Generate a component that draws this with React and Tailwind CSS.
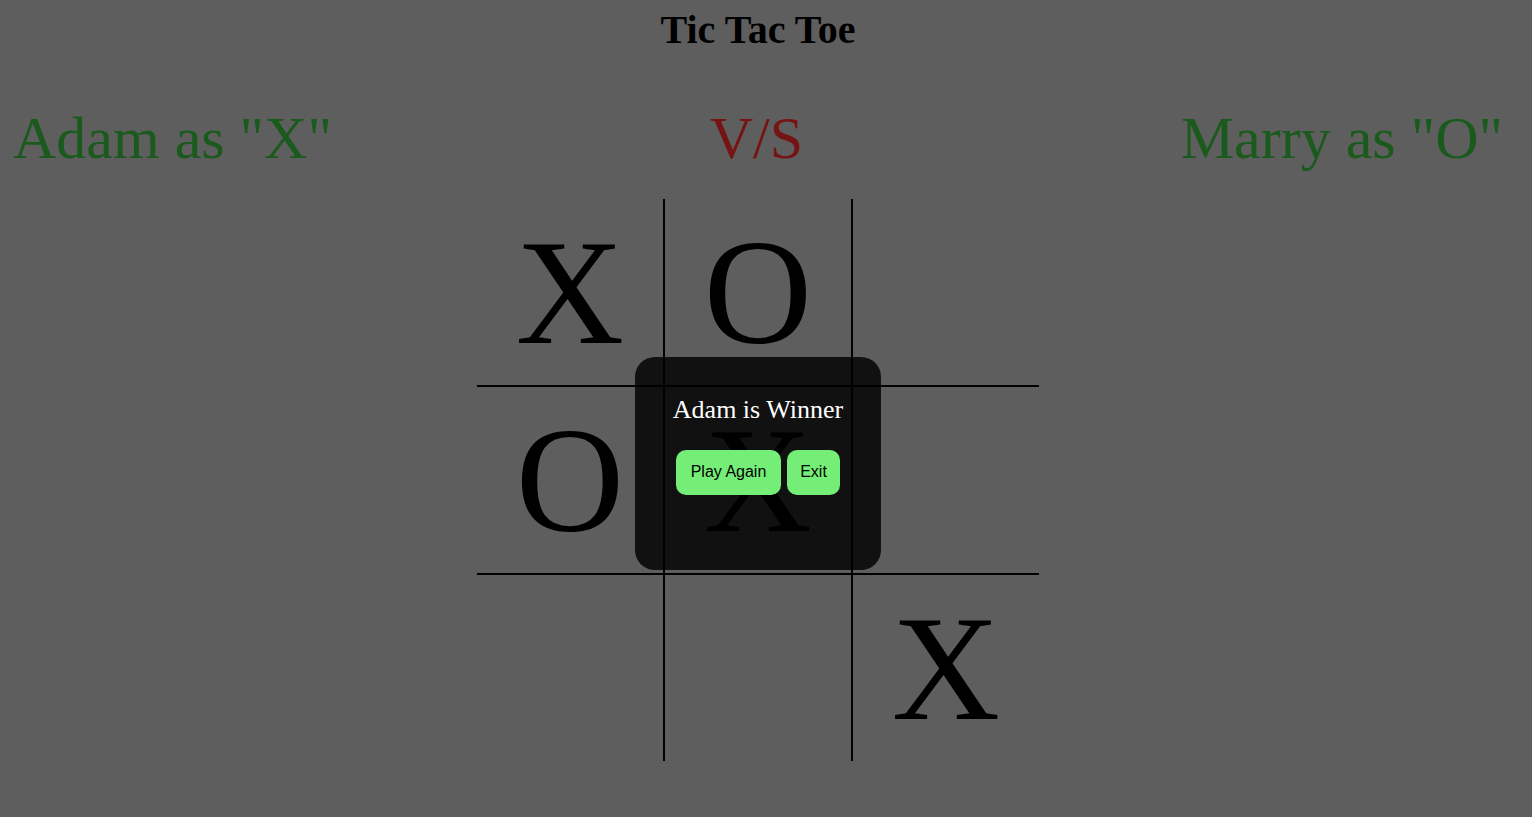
import React from "react";

const board = ["X", "O", "", "O", "X", "", "", "", "X"];

export default function App() {
  const serif = { fontFamily: '"Liberation Serif", "Times New Roman", serif' };
  return (
    <div className="min-h-[817px] w-full bg-[#5e5e5e]" style={serif}>
      <div className="w-[1516px] flex flex-col items-center">
        <h1 className="pt-[7px] text-[40px] leading-[46px] font-bold text-black">Tic Tac Toe</h1>
        <div className="mt-[51px] w-full px-[13px] flex justify-between text-[60px] leading-[69px]">
          <span className="text-[#1b5a1d]">Adam as "X"</span>
          <span className="text-[#761313]">V/S</span>
          <span className="text-[#1b5a1d]">Marry as "O"</span>
        </div>
        <div className="relative mt-[26px]">
          <div className="grid grid-cols-[repeat(3,auto)]">
            {board.map((v, i) => {
              const col = i % 3;
              const row = Math.floor(i / 3);
              return (
                <div
                  key={i}
                  className={
                    "box-content w-[186px] h-[186px] flex items-center justify-center text-[150px] leading-none text-black border-black " +
                    (col < 2 ? "border-r-2 " : "") +
                    (row < 2 ? "border-b-2" : "")
                  }
                >
                  {v}
                </div>
              );
            })}
          </div>
          <div className="absolute left-[158px] top-[158px] w-[246px] h-[213px] rounded-[20px] bg-black/[0.82] flex flex-col items-center pt-[38px]">
            <div className="text-[26px] leading-[30px] text-white">Adam is Winner</div>
            <div
              className="mt-[25px] flex gap-[6px]"
              style={{ fontFamily: '"Liberation Sans", Arial, sans-serif' }}
            >
              <button className="w-[105px] h-[45px] pb-[2px] rounded-[10px] bg-[#74ee77] text-[16px] text-black flex items-center justify-center">
                Play Again
              </button>
              <button className="w-[53px] h-[45px] pb-[2px] rounded-[10px] bg-[#74ee77] text-[16px] text-black flex items-center justify-center">
                Exit
              </button>
            </div>
          </div>
        </div>
      </div>
    </div>
  );
}
